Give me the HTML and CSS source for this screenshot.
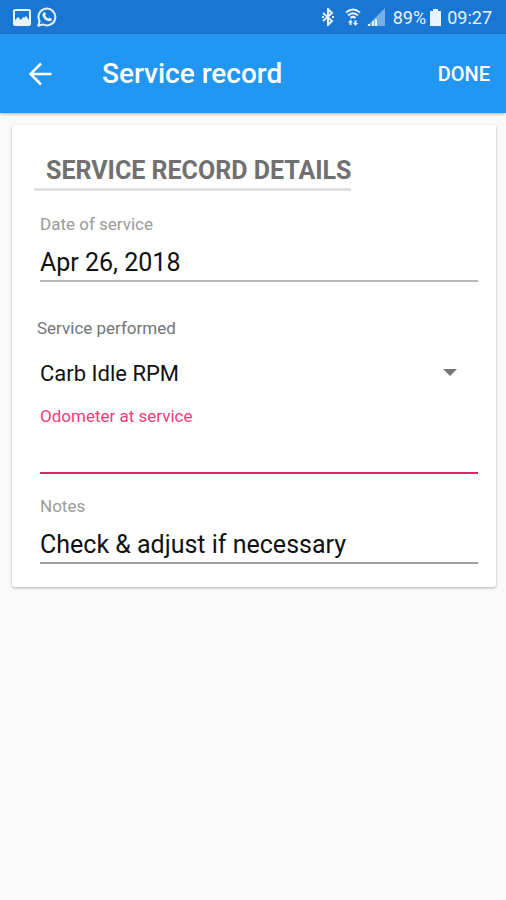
FILE: index.html
```html
<!DOCTYPE html>
<html lang="en">
<head>
    <meta charset="UTF-8">
    <meta name="viewport" content="width=device-width, initial-scale=1.0">
    <title>Service record</title>
    <link rel="stylesheet" href="styles.css">
</head>

<body>
    <div class="status-bar">
        <div class="status-group">
            <svg width="18" height="17" viewBox="0 0 18 17">
                <path fill="currentColor" fill-rule="evenodd" d="M2 0h14a2 2 0 0 1 2 2v13a2 2 0 0 1-2 2H2a2 2 0 0 1-2-2V2a2 2 0 0 1 2-2zM2 2v9l3-3 3 3 2-3 1 1 2-2 3 4V2z"/>
            </svg>
            <svg width="20" height="20" viewBox="0 0 20 20">
                <path fill="none" stroke="currentColor" stroke-width="2" stroke-linejoin="round" d="M1.3 18.7l1.3-4.6A8.4 8.4 0 1 1 6 17.4z"/>
                <path fill="currentColor" d="M6.9 5.2c.5-.4 1-.3 1.2.2l.8 1.7c.1.4-.1.7-.7 1.4.7 1.5 1.7 2.4 3.2 3.1.6-.8.9-1.1 1.3-.9l1.7.8c.5.3.5.7.3 1.2-.6 1.4-2 1.8-3.5 1.4-3-.9-5-2.9-5.7-5.500-.3-1.400.3-2.700 1.400-3.400z"/>
            </svg>
        </div>
        <div class="status-group">
            <svg class="bluetooth" width="12" height="18" viewBox="0 0 12 18">
                <path fill="none" stroke="currentColor" stroke-width="2" d="M1 5l9 8-4 4V1l4 4-9 8"/>
                <path fill="currentColor" d="M0 8h2v2H0zM10 8h2v2h-2z"/>
            </svg>
            <svg class="wifi" width="16" height="18" viewBox="0 0 16 18">
                <path fill="none" stroke="currentColor" stroke-width="2" d="M1 4.500q7-6 14 0M3 7.500q5-4.500 10 0M5.500 10q2.500-2.300 5 0"/>
                <path fill="currentColor" d="M5.500 11.500l2.500 3H6.500V17h-2v-2.500H3zM10.500 18L8 15h1.500v-2.500h2V15H13z"/>
            </svg>
            <svg class="signal" width="18" height="18" viewBox="0 0 18 18">
                <path fill="currentColor" opacity=".45" d="M18 0v18H0z"/>
                <path fill="currentColor" d="M1 16h2v2H1zM5 13h2v5H5zM8 11h2v7H8z"/>
            </svg>
            <span>89%</span>
            <svg class="battery" width="11" height="17" viewBox="0 0 11 17">
                <path fill="currentColor" d="M3 0h5v2h3v15H0V2h3z"/>
            </svg>
            <span>09:27</span>
        </div>
    </div>

    <header class="app-bar">
        <button type="button" class="back-button" aria-label="Back">
            <svg width="24" height="24" viewBox="0 0 24 24">
                <path fill="none" stroke="currentColor" stroke-width="2.500" d="M23.500 12H2.500M13 1.500L2.500 12 13 22.500"/>
            </svg>
        </button>
        <h1>Service record</h1>
        <button type="submit" form="service-form" class="done-button">DONE</button>
    </header>

    <main>
        <form id="service-form" class="card">
            <h2>SERVICE RECORD DETAILS</h2>

            <div class="field">
                <label for="service-date">Date of service</label>
                <input type="text" id="service-date" name="date" class="date-input" value="Apr 26, 2018">
            </div>

            <div class="field service-field">
                <label for="service-type">Service performed</label>
                <div class="select-box">
                    <select id="service-type" name="service">
                        <option>Carb Idle RPM</option>
                    </select>
                    <svg class="select-arrow" width="14" height="7" viewBox="0 0 14 7">
                        <path fill="currentColor" d="M0 0h14L7 7z"/>
                    </svg>
                </div>
            </div>

            <div class="field active">
                <label for="odometer">Odometer at service</label>
                <input type="text" id="odometer" name="odometer" inputmode="numeric">
            </div>

            <div class="field notes-field">
                <label for="notes">Notes</label>
                <input type="text" id="notes" name="notes" value="Check &amp; adjust if necessary">
            </div>
        </form>
    </main>
</body>
</html>
```

FILE: styles.css
```css
/* General Styles */
* {
    margin: 0;
    padding: 0;
    box-sizing: border-box;
}

body {
    font-family: Roboto, Arial, sans-serif;
    background: #fafafa;
    color: #111;
}

button, input, select {
    font-family: inherit;
    border: none;
    border-radius: 0;
    background: none;
    outline: none;
}

button {
    color: white;
    cursor: pointer;
}

svg {
    display: block;
}

/* Status bar */
.status-bar {
    display: flex;
    justify-content: space-between;
    align-items: center;
    height: 34px;
    padding: 0 14px 0 13px;
    background: #1976d2;
    color: #e8f3ff;
    font-size: 18px;
}

.status-group {
    display: flex;
    align-items: center;
    gap: 6px;
}

.bluetooth {
    margin-right: 5px;
}

.signal {
    margin-right: 2px;
}

.battery {
    margin-left: -2px;
}

/* App bar */
.app-bar {
    display: flex;
    align-items: center;
    height: 79px;
    padding: 0 16px 0 28px;
    background: #2196f3;
    color: white;
    box-shadow: 0 1px 3px rgba(0, 0, 0, 0.3);
}

.app-bar h1 {
    flex: 1;
    margin-left: 50px;
    font-size: 28px;
    font-weight: 500;
}

.done-button {
    font-size: 20px;
    font-weight: 500;
}

/* Form card */
main {
    padding: 12px 10px 12px 12px;
}

.card {
    padding: 28px 18px 23px 28px;
    background: white;
    border-radius: 3px;
    box-shadow: 0 1px 3px rgba(0, 0, 0, 0.3);
}

.card h2 {
    width: fit-content;
    margin: 0 0 21px -6px;
    padding-left: 12px;
    border-bottom: 3px solid #e0e0e0;
    color: #707070;
    font-size: 25px;
    font-weight: 700;
    line-height: 35px;
}

.field {
    display: flex;
    flex-direction: column;
}

.field label {
    color: #9a9a9a;
    font-size: 17px;
    line-height: 24px;
}

.field input {
    width: 100%;
    height: 46px;
    padding-top: 8px;
    border-bottom: 2px solid #a0a0a0;
    color: #111;
    font-size: 25px;
}

.field .date-input {
    border-bottom-color: #b8b8b8;
}

.service-field {
    margin-top: 34px;
}

.service-field label {
    margin-left: -3px;
    color: #757575;
}

.select-box {
    position: relative;
}

.select-box select {
    width: 100%;
    height: 64px;
    padding-top: 2px;
    appearance: none;
    color: #111;
    font-size: 22px;
}

.select-arrow {
    position: absolute;
    top: 50%;
    right: 21px;
    margin-top: -3px;
    color: #757575;
    pointer-events: none;
}

.active label {
    color: #ec407a;
}

.active input {
    border-bottom-color: #e91e63;
}

.notes-field {
    margin-top: 20px;
}
```
